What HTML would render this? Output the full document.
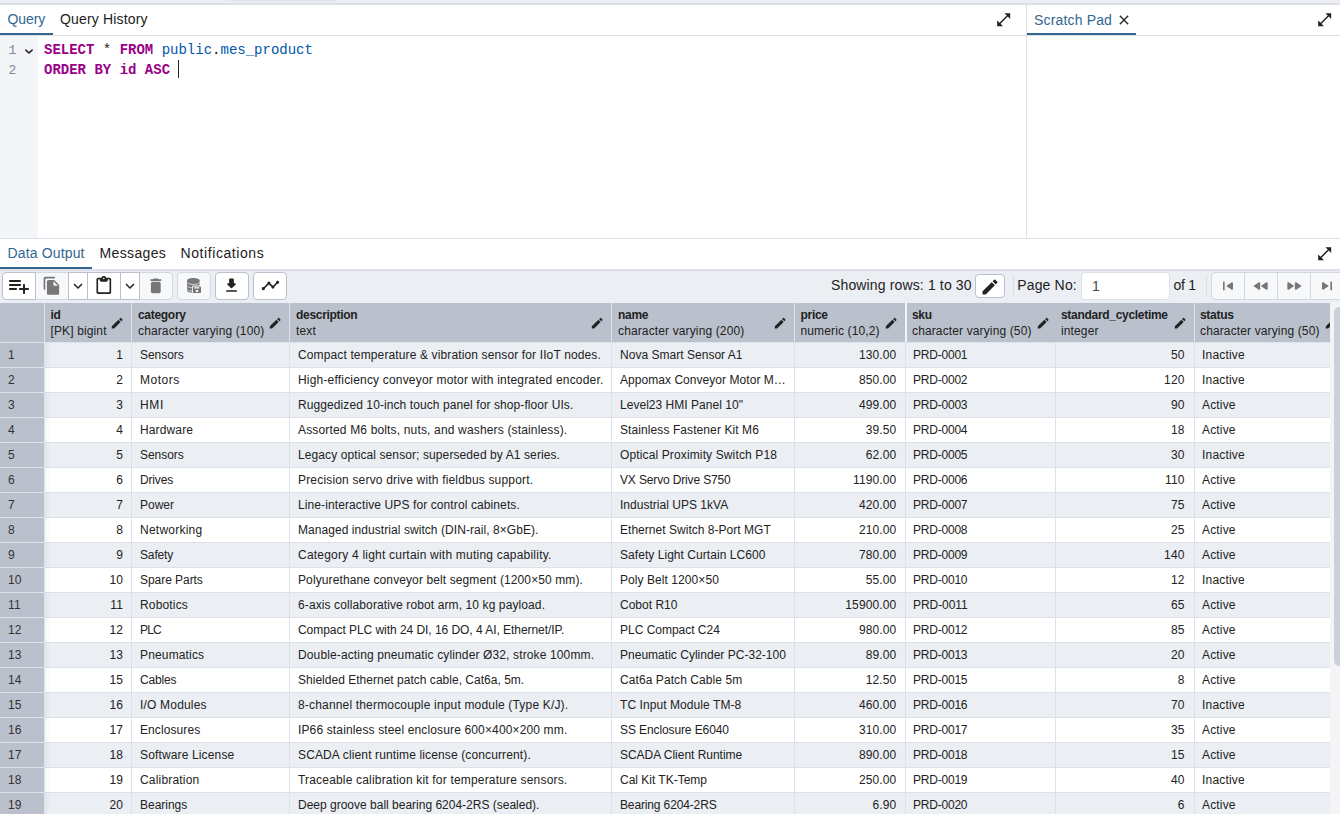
<!DOCTYPE html>
<html lang="en"><head><meta charset="utf-8"><title>Query Tool</title>
<style>
*{box-sizing:border-box;margin:0;padding:0}
html,body{width:1340px;height:814px;overflow:hidden;background:#fff}
body{position:relative;font-family:"Liberation Sans",sans-serif;font-size:14px;color:#222;-webkit-font-smoothing:antialiased}
.abs{position:absolute}
#topband{left:0;top:0;width:1340px;height:5px;background:#ebeef3;border-bottom:2px solid #dde0e6}
#toptab{left:230px;top:0;width:105px;height:1px;background:#dfe2e8}
.tabbar{height:31px;border-bottom:1px solid #dde0e6;background:#fff}
.tab{position:absolute;top:0;height:30px;line-height:28px;font-size:14px;color:#222;white-space:nowrap}
.tab.act{color:#326690;border-bottom:2px solid #326690}
.ico{position:absolute;fill:#222}
#gutter{left:0;top:36px;width:38px;height:202px;background:#f3f5f9}
.ln{position:absolute;left:8.500px;font-family:"Liberation Mono",monospace;font-size:13px;line-height:20px;color:#7f8899}
.code{position:absolute;left:44px;font-family:"Liberation Mono",monospace;font-size:14px;line-height:20px;white-space:pre;color:#222}
.kw{color:#908;font-weight:bold}
.vr{color:#05a}
#vsplit{left:1026px;top:5px;width:1px;height:233px;background:#dde0e6}
#hsplit{left:0;top:238px;width:1340px;height:1px;background:#dde0e6}
#toolbar{left:0;top:270px;width:1340px;height:33px;background:#ebeef3;border-top:1px solid #dde0e6}
.btn{position:absolute;top:272px;height:28px;background:#fff;border:1px solid #bac1cd}
.btn.dis{background:#f7f8fa;border-color:#d3d8e0}
.btn svg{position:absolute;fill:#222}
.btn.dis svg{fill:#777}
.tt{position:absolute;font-size:14px;line-height:16px;white-space:nowrap;color:#222}
.ghead{position:absolute;left:0;top:303px;width:1330px;height:40px;overflow:hidden;background:#bac1cd;border-bottom:1px solid #e0e3e9}
.hc{position:absolute;top:0;height:39px;border-right:1px solid #dfe2e8;font-size:12px;line-height:16px;color:#222;padding:4px 0 0 6px;white-space:nowrap;overflow:hidden}
.hc b{display:block;font-weight:bold;letter-spacing:-.3px}
.hc span{display:block;letter-spacing:.13px}
.hc .pen{position:absolute;right:6.2px;top:12.5px;width:14.4px;height:14.4px;fill:#222}
.hc.nb{border-right-color:transparent}
.hc.nb .pen{right:4.2px}
.hc.st .pen{right:4.4px}
.hc.wb{border-right:2px solid #f1f3f6;z-index:2}
#fshadow{left:45px;top:343px;width:5px;height:471px;background:linear-gradient(to right,rgba(40,50,70,.05),rgba(40,50,70,0))}
.row{position:absolute;left:0;width:1330px;height:25px;background:#fff;overflow:hidden}
.row.odd{background:#ebeef3}
.c{position:absolute;top:0;height:25px;line-height:24px;font-size:12px;padding:0 8px;border-right:1px solid #dde0e6;border-bottom:1px solid #dde0e6;white-space:nowrap;overflow:hidden;color:#222;letter-spacing:.13px}
.c.r{text-align:right}
.c.rn{background:#bac1cd;border-right:1px solid #dfe2e8;border-bottom:1px solid #dfe2e8;color:#333}
#sbtrack{left:1330px;top:303px;width:10px;height:511px;background:#f3f4f6}
#sbthumb{left:1334px;top:307px;width:10px;height:359px;border-radius:5px;background:#ccd0da}
</style></head><body>
<div class="abs" id="topband"></div><div class="abs" id="toptab"></div>

<div class="abs tabbar" style="left:0;top:5px;width:1026px">
  <div class="tab act" style="left:0;width:53px;padding-left:7.500px;letter-spacing:-.1px">Query</div>
  <div class="tab" style="left:60px;letter-spacing:.17px">Query History</div>
</div>
<svg class="ico" style="left:994.830px;top:10.800px;width:17.330px;height:17.330px" viewBox="0 0 24 24"><path d="M21 11V3h-8l3.290 3.290-10 10L3 13v8h8l-3.290-3.290 10-10z"/></svg>

<div class="abs tabbar" style="left:1027px;top:5px;width:313px">
  <div class="tab act" style="left:0;width:109px;padding-left:7px;line-height:30px;letter-spacing:.16px">Scratch Pad</div>
</div>
<svg class="ico" style="left:1116.1px;top:12.35px;width:16px;height:16px" viewBox="0 0 24 24"><path d="M19 6.410 17.590 5 12 10.590 6.410 5 5 6.410 10.590 12 5 17.590 6.410 19 12 13.410 17.590 19 19 17.590 13.410 12z"/></svg>
<svg class="ico" style="left:1315.830px;top:10.800px;width:17.330px;height:17.330px" viewBox="0 0 24 24"><path d="M21 11V3h-8l3.290 3.290-10 10L3 13v8h8l-3.290-3.290 10-10z"/></svg>

<div class="abs" id="gutter"></div>
<div class="ln" style="top:41.300px">1</div>
<div class="ln" style="top:61.300px">2</div>
<svg class="abs" style="left:20px;top:43.500px;width:18px;height:14px" viewBox="0 0 18 14"><path d="M5.900 6.100l3.100 2.900 3.100-2.900" fill="none" stroke="#222" stroke-width="1.600" stroke-linecap="round" stroke-linejoin="round"/></svg>
<div class="code" style="top:40px"><span class="kw">SELECT</span> * <span class="kw">FROM</span> <span class="vr">public</span>.<span class="vr">mes_product</span></div>
<div class="code" style="top:60px"><span class="kw">ORDER BY</span> <span class="kw">id</span> <span class="kw">ASC</span> </div>
<div class="abs" style="left:178px;top:60px;width:1px;height:18px;background:#222"></div>
<div class="abs" id="vsplit"></div>
<div class="abs" id="hsplit"></div>

<div class="abs tabbar" style="left:0;top:239px;width:1340px">
  <div class="tab act" style="left:0;width:92px;padding-left:7.500px;letter-spacing:.15px">Data Output</div>
  <div class="tab" style="left:99.500px;letter-spacing:.36px">Messages</div>
  <div class="tab" style="left:180.500px;letter-spacing:.58px">Notifications</div>
</div>
<svg class="ico" style="left:1315.830px;top:244.800px;width:17.330px;height:17.330px" viewBox="0 0 24 24"><path d="M21 11V3h-8l3.290 3.290-10 10L3 13v8h8l-3.290-3.290 10-10z"/></svg>

<div class="abs" id="toolbar"></div>
<div class="btn dis" style="left:35px;width:34px;border-radius:0;"><svg style="left:6.20px;top:3.20px;width:19.6px;height:19.6px" viewBox="0 0 24 24"><path d="M15 1H4c-1.1 0-2 .9-2 2v13c0 .55.45 1 1 1s1-.45 1-1V4c0-.55.45-1 1-1h10c.55 0 1-.45 1-1s-.45-1-1-1zm.59 4.59 4.83 4.83c.37.37.58.88.58 1.41V21c0 1.1-.9 2-2 2H7.990C6.890 23 6 22.1 6 21l.01-14c0-1.1.89-2 1.990-2h6.170c.53 0 1.040.21 1.420.59zM15 12h4.500L14 6.500V11c0 .55.45 1 1 1z"/></svg></div>
<div class="btn dis" style="left:139px;width:34px;border-radius:0 4px 4px 0;"><svg style="left:6.20px;top:3.20px;width:19.6px;height:19.6px" viewBox="0 0 24 24"><path d="M6 19c0 1.1.9 2 2 2h8c1.1 0 2-.9 2-2V9c0-1.1-.9-2-2-2H8c-1.1 0-2 .9-2 2v10zM18 4h-2.500l-.71-.71c-.18-.18-.44-.29-.7-.29H9.910c-.26 0-.52.11-.7.29L8.500 4H6c-.55 0-1 .45-1 1s.45 1 1 1h12c.55 0 1-.45 1-1s-.45-1-1-1z"/></svg></div>
<div class="btn" style="left:2px;width:34px;border-radius:4px 0 0 4px;"><svg style="left:4.00px;top:1.00px;width:24px;height:24px" viewBox="0 0 24 24"><path d="M13 10H3c-.55 0-1 .45-1 1s.45 1 1 1h10c.55 0 1-.45 1-1s-.45-1-1-1zm0-4H3c-.55 0-1 .45-1 1s.45 1 1 1h10c.55 0 1-.45 1-1s-.45-1-1-1zm5 8v-3c0-.55-.45-1-1-1s-1 .45-1 1v3h-3c-.55 0-1 .45-1 1s.45 1 1 1h3v3c0 .55.45 1 1 1s1-.45 1-1v-3h3c.55 0 1-.45 1-1s-.45-1-1-1h-3zM3 16h6c.55 0 1-.45 1-1s-.45-1-1-1H3c-.55 0-1 .45-1 1s.45 1 1 1z"/></svg></div>
<div class="btn" style="left:68px;width:20px;border-radius:0;"><svg style="left:0.00px;top:4.00px;width:18px;height:18px" viewBox="0 0 24 24"><path d="M7.41 8.59 12 13.17l4.59-4.58L18 10l-6 6-6-6 1.41-1.41z"/></svg></div>
<div class="btn" style="left:87px;width:34px;border-radius:0;"><svg style="left:6.20px;top:3.20px;width:19.6px;height:19.6px" viewBox="0 0 24 24"><path d="M19 2h-4.180C14.4.84 13.3 0 12 0S9.600.84 9.180 2H5c-1.1 0-2 .9-2 2v16c0 1.1.9 2 2 2h14c1.1 0 2-.9 2-2V4c0-1.1-.9-2-2-2zm-7 0c.55 0 1 .45 1 1s-.45 1-1 1-1-.45-1-1 .45-1 1-1zm6 18H6c-.55 0-1-.45-1-1V5c0-.55.45-1 1-1h1v1c0 1.1.9 2 2 2h6c1.1 0 2-.9 2-2V4h1c.55 0 1 .45 1 1v14c0 .55-.45 1-1 1z"/></svg></div>
<div class="btn" style="left:120px;width:20px;border-radius:0;"><svg style="left:0.00px;top:4.00px;width:18px;height:18px" viewBox="0 0 24 24"><path d="M7.41 8.59 12 13.17l4.59-4.58L18 10l-6 6-6-6 1.41-1.41z"/></svg></div>
<div class="btn dis" style="left:177px;width:34px;border-radius:4px;"><svg style="left:0;top:0;width:32px;height:26px" viewBox="0 0 32 26"><path d="M9 7.400C9 6.100 11.800 5.100 15.300 5.100s6.300 1 6.300 2.300v10c0 1.300-2.800 2.300-6.300 2.300S9 18.700 9 17.400z"/><path d="M9 9.400c0 1.100 2.800 2 6.300 2s6.300-.9 6.300-2M9 12.800c0 1.100 2.800 2 6.300 2s6.300-.9 6.300-2M9 16.100c0 1.100 2.800 2 6.300 2s6.300-.9 6.300-2" fill="none" stroke="#f7f8fa" stroke-width=".7"/><rect x="14.200" y="12.600" width="9.600" height="8.200" rx="1" fill="#f7f8fa"/><rect x="15" y="13.400" width="8" height="6.600" rx=".8"/><rect x="16.400" y="14.200" width="4.800" height="1.300" fill="#f7f8fa"/><rect x="17.800" y="17" width="2.400" height="2" fill="#f7f8fa"/></svg></div>
<div class="btn" style="left:215px;width:34px;border-radius:4px;"><svg style="left:6.20px;top:2.50px;width:19px;height:19px" viewBox="0 0 24 24"><path d="M16.59 9H15V4c0-.55-.45-1-1-1h-4c-.55 0-1 .45-1 1v5H7.410c-.89 0-1.340 1.080-.71 1.710l4.590 4.590c.39.39 1.020.39 1.410 0l4.590-4.590c.63-.63.19-1.710-.7-1.710zM5 19c0 .55.45 1 1 1h12c.55 0 1-.45 1-1s-.45-1-1-1H6c-.55 0-1 .45-1 1z"/></svg></div>
<div class="btn" style="left:253px;width:34px;border-radius:4px;"><svg style="left:6.50px;top:3.00px;width:19px;height:19px" viewBox="0 0 24 24"><path d="M23 8c0 1.1-.9 2-2 2-.18 0-.35-.02-.51-.07l-3.560 3.550c.05.16.07.34.07.52 0 1.1-.9 2-2 2s-2-.9-2-2c0-.18.02-.36.07-.52l-2.550-2.550c-.16.05-.34.07-.52.07s-.36-.02-.52-.07l-4.550 4.560c.05.16.07.33.07.51 0 1.1-.9 2-2 2s-2-.9-2-2 .9-2 2-2c.18 0 .35.02.51.07l4.560-4.550C8.020 9.360 8 9.180 8 9c0-1.1.9-2 2-2s2 .9 2 2c0 .18-.02.36-.07.52l2.550 2.550c.16-.05.34-.07.52-.07s.36.02.52.07l3.550-3.560C19.020 8.350 19 8.180 19 8c0-1.1.9-2 2-2s2 .9 2 2z"/></svg></div>
<div class="tt" style="left:831px;top:277px;letter-spacing:.14px">Showing rows: 1 to 30</div>
<div class="btn" style="left:975px;top:274px;width:30px;height:24px;border-radius:4px"><svg style="left:4.00px;top:1.50px;width:20px;height:20px" viewBox="0 0 24 24"><path d="M3 17.460v3.040c0 .28.22.5.5.5h3.040c.13 0 .26-.05.35-.15L17.810 9.940l-3.750-3.750L3.150 17.1c-.1.1-.15.22-.15.36zM20.710 7.040a.996.996 0 0 0 0-1.410l-2.340-2.340a.996.996 0 0 0-1.410 0l-1.830 1.830 3.750 3.750 1.830-1.830z"/></svg></div>
<div class="abs" style="left:1013px;top:276px;width:1px;height:20px;background:#d9dde4"></div>
<div class="tt" style="left:1017.200px;top:277px;letter-spacing:.17px">Page No:</div>
<div class="abs" style="left:1081px;top:272px;width:89px;height:28px;background:#fff;border:1px solid #dde0e6;border-radius:4px"></div>
<div class="tt" style="left:1092px;top:278px;color:#444">1</div>
<div class="tt" style="left:1173.600px;top:277px;letter-spacing:-.27px">of 1</div>
<div class="abs" style="left:1206px;top:276px;width:1px;height:20px;background:#d9dde4"></div>
<div class="btn dis" style="left:1211px;width:34px;border-radius:4px 0 0 4px;"><svg preserveAspectRatio="none" style="left:6.00px;top:3.50px;width:20px;height:18px" viewBox="0 0 24 24"><path d="M7 6c.55 0 1 .45 1 1v10c0 .55-.45 1-1 1s-1-.45-1-1V7c0-.55.45-1 1-1zm3.660 6.820 5.770 4.070c.66.47 1.580-.01 1.580-.82V7.930c0-.81-.91-1.280-1.580-.82l-5.770 4.070c-.57.4-.57 1.240 0 1.640z"/></svg></div>
<div class="btn dis" style="left:1244px;width:34px;border-radius:0;"><svg preserveAspectRatio="none" style="left:6.00px;top:3.50px;width:20px;height:18px" viewBox="0 0 24 24"><path d="M11 16.070V7.930c0-.81-.91-1.280-1.580-.82l-5.770 4.070c-.56.4-.56 1.240 0 1.630l5.770 4.070c.67.47 1.580 0 1.580-.81zm1.660-3.250 5.770 4.070c.66.47 1.580-.01 1.580-.82V7.930c0-.81-.91-1.280-1.580-.82l-5.770 4.070c-.57.4-.57 1.240 0 1.640z"/></svg></div>
<div class="btn dis" style="left:1277px;width:34px;border-radius:0;"><svg preserveAspectRatio="none" style="left:6.00px;top:3.50px;width:20px;height:18px" viewBox="0 0 24 24"><path d="M5.580 16.890l5.770-4.070c.56-.4.56-1.240 0-1.630L5.580 7.110C4.910 6.650 4 7.120 4 7.930v8.140c0 .81.91 1.280 1.580.82zM13 7.930v8.140c0 .81.91 1.280 1.580.82l5.770-4.070c.56-.4.56-1.240 0-1.630l-5.770-4.070c-.67-.47-1.580 0-1.580.81z"/></svg></div>
<div class="btn dis" style="left:1310px;width:34px;border-radius:0;"><svg preserveAspectRatio="none" style="left:6.00px;top:3.50px;width:20px;height:18px" viewBox="0 0 24 24"><path d="M7.580 16.890l5.770-4.070c.56-.4.56-1.240 0-1.630L7.580 7.110C6.910 6.650 6 7.120 6 7.930v8.140c0 .81.91 1.280 1.580.82zM16 7v10c0 .55.450 1 1 1s1-.45 1-1V7c0-.55-.45-1-1-1s-1 .45-1 1z"/></svg></div>
<div class="ghead">
<div class="hc" style="left:0;width:45px"></div>
<div class="hc" style="left:45px;width:87px;padding-left:5.500px"><b>id</b><span>[PK] bigint</span><svg class="pen" viewBox="0 0 24 24"><path d="M3 17.25V21h3.75L17.81 9.94l-3.75-3.75L3 17.25zM20.71 7.04a.996.996 0 0 0 0-1.41l-2.34-2.34a.996.996 0 0 0-1.41 0l-1.83 1.83 3.75 3.75 1.83-1.83z"/></svg></div>
<div class="hc" style="left:132px;width:158px"><b>category</b><span>character varying (100)</span><svg class="pen" viewBox="0 0 24 24"><path d="M3 17.25V21h3.75L17.81 9.94l-3.75-3.75L3 17.25zM20.71 7.04a.996.996 0 0 0 0-1.41l-2.34-2.34a.996.996 0 0 0-1.41 0l-1.83 1.83 3.75 3.75 1.83-1.83z"/></svg></div>
<div class="hc" style="left:290px;width:322px"><b>description</b><span>text</span><svg class="pen" viewBox="0 0 24 24"><path d="M3 17.25V21h3.75L17.81 9.94l-3.75-3.75L3 17.25zM20.71 7.04a.996.996 0 0 0 0-1.41l-2.34-2.34a.996.996 0 0 0-1.41 0l-1.83 1.83 3.75 3.75 1.83-1.83z"/></svg></div>
<div class="hc" style="left:612px;width:183px"><b>name</b><span>character varying (200)</span><svg class="pen" viewBox="0 0 24 24"><path d="M3 17.25V21h3.75L17.81 9.94l-3.75-3.75L3 17.25zM20.71 7.04a.996.996 0 0 0 0-1.41l-2.34-2.34a.996.996 0 0 0-1.41 0l-1.83 1.83 3.75 3.75 1.83-1.83z"/></svg></div>
<div class="hc wb" style="left:795px;width:112px;padding-left:5.500px"><b>price</b><span>numeric (10,2)</span><svg class="pen" viewBox="0 0 24 24"><path d="M3 17.25V21h3.75L17.81 9.94l-3.75-3.75L3 17.25zM20.71 7.04a.996.996 0 0 0 0-1.41l-2.34-2.34a.996.996 0 0 0-1.41 0l-1.83 1.83 3.75 3.75 1.83-1.83z"/></svg></div>
<div class="hc nb" style="left:906px;width:150px"><b>sku</b><span>character varying (50)</span><svg class="pen" viewBox="0 0 24 24"><path d="M3 17.25V21h3.75L17.81 9.94l-3.75-3.75L3 17.25zM20.71 7.04a.996.996 0 0 0 0-1.41l-2.34-2.34a.996.996 0 0 0-1.41 0l-1.83 1.83 3.75 3.75 1.83-1.83z"/></svg></div>
<div class="hc" style="left:1056px;width:139px;padding-left:5px"><b>standard_cycletime</b><span>integer</span><svg class="pen" viewBox="0 0 24 24"><path d="M3 17.25V21h3.75L17.81 9.94l-3.75-3.75L3 17.25zM20.71 7.04a.996.996 0 0 0 0-1.41l-2.34-2.34a.996.996 0 0 0-1.41 0l-1.83 1.83 3.75 3.75 1.83-1.83z"/></svg></div>
<div class="hc st" style="left:1195px;width:149px;padding-left:5px"><b>status</b><span>character varying (50)</span><svg class="pen" viewBox="0 0 24 24"><path d="M3 17.25V21h3.75L17.81 9.94l-3.75-3.75L3 17.25zM20.71 7.04a.996.996 0 0 0 0-1.41l-2.34-2.34a.996.996 0 0 0-1.41 0l-1.83 1.83 3.75 3.75 1.83-1.83z"/></svg></div>
</div>
<div class="row odd" style="top:343px">
<div class="c rn" style="left:0px;width:45px">1</div>
<div class="c r" style="left:45px;width:87px">1</div>
<div class="c" style="left:132px;width:158px;letter-spacing:-.037px">Sensors</div>
<div class="c" style="left:290px;width:322px;letter-spacing:.130px">Compact temperature &amp; vibration sensor for IIoT nodes.</div>
<div class="c" style="left:612px;width:183px;letter-spacing:.025px">Nova Smart Sensor A1</div>
<div class="c r" style="left:795px;width:111px;padding-right:8.600px">130.00</div>
<div class="c" style="left:906px;width:150px;padding-left:7px;letter-spacing:-.213px">PRD-0001</div>
<div class="c r" style="left:1056px;width:139px;padding-right:9.500px">50</div>
<div class="c" style="left:1195px;width:149px;padding-left:7px;letter-spacing:.187px">Inactive</div>
</div>
<div class="row" style="top:368px">
<div class="c rn" style="left:0px;width:45px">2</div>
<div class="c r" style="left:45px;width:87px">2</div>
<div class="c" style="left:132px;width:158px;letter-spacing:.530px">Motors</div>
<div class="c" style="left:290px;width:322px;letter-spacing:.185px">High-efficiency conveyor motor with integrated encoder.</div>
<div class="c" style="left:612px;width:183px;letter-spacing:.047px">Appomax Conveyor Motor M…</div>
<div class="c r" style="left:795px;width:111px;padding-right:8.600px">850.00</div>
<div class="c" style="left:906px;width:150px;padding-left:7px;letter-spacing:-.213px">PRD-0002</div>
<div class="c r" style="left:1056px;width:139px;padding-right:9.500px">120</div>
<div class="c" style="left:1195px;width:149px;padding-left:7px;letter-spacing:.187px">Inactive</div>
</div>
<div class="row odd" style="top:393px">
<div class="c rn" style="left:0px;width:45px">3</div>
<div class="c r" style="left:45px;width:87px">3</div>
<div class="c" style="left:132px;width:158px;letter-spacing:.630px">HMI</div>
<div class="c" style="left:290px;width:322px;letter-spacing:.090px">Ruggedized 10-inch touch panel for shop-floor UIs.</div>
<div class="c" style="left:612px;width:183px;letter-spacing:.030px">Level23 HMI Panel 10"</div>
<div class="c r" style="left:795px;width:111px;padding-right:8.600px">499.00</div>
<div class="c" style="left:906px;width:150px;padding-left:7px;letter-spacing:-.213px">PRD-0003</div>
<div class="c r" style="left:1056px;width:139px;padding-right:9.500px">90</div>
<div class="c" style="left:1195px;width:149px;padding-left:7px;letter-spacing:.170px">Active</div>
</div>
<div class="row" style="top:418px">
<div class="c rn" style="left:0px;width:45px">4</div>
<div class="c r" style="left:45px;width:87px">4</div>
<div class="c" style="left:132px;width:158px;letter-spacing:.130px">Hardware</div>
<div class="c" style="left:290px;width:322px;letter-spacing:.161px">Assorted M6 bolts, nuts, and washers (stainless).</div>
<div class="c" style="left:612px;width:183px;letter-spacing:.088px">Stainless Fastener Kit M6</div>
<div class="c r" style="left:795px;width:111px;padding-right:8.600px">39.50</div>
<div class="c" style="left:906px;width:150px;padding-left:7px;letter-spacing:-.213px">PRD-0004</div>
<div class="c r" style="left:1056px;width:139px;padding-right:9.500px">18</div>
<div class="c" style="left:1195px;width:149px;padding-left:7px;letter-spacing:.170px">Active</div>
</div>
<div class="row odd" style="top:443px">
<div class="c rn" style="left:0px;width:45px">5</div>
<div class="c r" style="left:45px;width:87px">5</div>
<div class="c" style="left:132px;width:158px;letter-spacing:-.037px">Sensors</div>
<div class="c" style="left:290px;width:322px;letter-spacing:.097px">Legacy optical sensor; superseded by A1 series.</div>
<div class="c" style="left:612px;width:183px;letter-spacing:.130px">Optical Proximity Switch P18</div>
<div class="c r" style="left:795px;width:111px;padding-right:8.600px">62.00</div>
<div class="c" style="left:906px;width:150px;padding-left:7px;letter-spacing:-.213px">PRD-0005</div>
<div class="c r" style="left:1056px;width:139px;padding-right:9.500px">30</div>
<div class="c" style="left:1195px;width:149px;padding-left:7px;letter-spacing:.187px">Inactive</div>
</div>
<div class="row" style="top:468px">
<div class="c rn" style="left:0px;width:45px">6</div>
<div class="c r" style="left:45px;width:87px">6</div>
<div class="c" style="left:132px;width:158px;letter-spacing:-.170px">Drives</div>
<div class="c" style="left:290px;width:322px;letter-spacing:.176px">Precision servo drive with fieldbus support.</div>
<div class="c" style="left:612px;width:183px;letter-spacing:-.148px">VX Servo Drive S750</div>
<div class="c r" style="left:795px;width:111px;padding-right:8.600px">1190.00</div>
<div class="c" style="left:906px;width:150px;padding-left:7px;letter-spacing:-.213px">PRD-0006</div>
<div class="c r" style="left:1056px;width:139px;padding-right:9.500px">110</div>
<div class="c" style="left:1195px;width:149px;padding-left:7px;letter-spacing:.170px">Active</div>
</div>
<div class="row odd" style="top:493px">
<div class="c rn" style="left:0px;width:45px">7</div>
<div class="c r" style="left:45px;width:87px">7</div>
<div class="c" style="left:132px;width:158px;letter-spacing:.005px">Power</div>
<div class="c" style="left:290px;width:322px;letter-spacing:.106px">Line-interactive UPS for control cabinets.</div>
<div class="c" style="left:612px;width:183px;letter-spacing:.019px">Industrial UPS 1kVA</div>
<div class="c r" style="left:795px;width:111px;padding-right:8.600px">420.00</div>
<div class="c" style="left:906px;width:150px;padding-left:7px;letter-spacing:-.213px">PRD-0007</div>
<div class="c r" style="left:1056px;width:139px;padding-right:9.500px">75</div>
<div class="c" style="left:1195px;width:149px;padding-left:7px;letter-spacing:.170px">Active</div>
</div>
<div class="row" style="top:518px">
<div class="c rn" style="left:0px;width:45px">8</div>
<div class="c r" style="left:45px;width:87px">8</div>
<div class="c" style="left:132px;width:158px;letter-spacing:.241px">Networking</div>
<div class="c" style="left:290px;width:322px;letter-spacing:.061px">Managed industrial switch (DIN-rail, 8×GbE).</div>
<div class="c" style="left:612px;width:183px;letter-spacing:.030px">Ethernet Switch 8-Port MGT</div>
<div class="c r" style="left:795px;width:111px;padding-right:8.600px">210.00</div>
<div class="c" style="left:906px;width:150px;padding-left:7px;letter-spacing:-.213px">PRD-0008</div>
<div class="c r" style="left:1056px;width:139px;padding-right:9.500px">25</div>
<div class="c" style="left:1195px;width:149px;padding-left:7px;letter-spacing:.170px">Active</div>
</div>
<div class="row odd" style="top:543px">
<div class="c rn" style="left:0px;width:45px">9</div>
<div class="c r" style="left:45px;width:87px">9</div>
<div class="c" style="left:132px;width:158px;letter-spacing:-.150px">Safety</div>
<div class="c" style="left:290px;width:322px;letter-spacing:.215px">Category 4 light curtain with muting capability.</div>
<div class="c" style="left:612px;width:183px;letter-spacing:.050px">Safety Light Curtain LC600</div>
<div class="c r" style="left:795px;width:111px;padding-right:8.600px">780.00</div>
<div class="c" style="left:906px;width:150px;padding-left:7px;letter-spacing:-.213px">PRD-0009</div>
<div class="c r" style="left:1056px;width:139px;padding-right:9.500px">140</div>
<div class="c" style="left:1195px;width:149px;padding-left:7px;letter-spacing:.170px">Active</div>
</div>
<div class="row" style="top:568px">
<div class="c rn" style="left:0px;width:45px">10</div>
<div class="c r" style="left:45px;width:87px">10</div>
<div class="c" style="left:132px;width:158px;letter-spacing:-.050px">Spare Parts</div>
<div class="c" style="left:290px;width:322px;letter-spacing:.108px">Polyurethane conveyor belt segment (1200×50 mm).</div>
<div class="c" style="left:612px;width:183px;letter-spacing:.067px">Poly Belt 1200×50</div>
<div class="c r" style="left:795px;width:111px;padding-right:8.600px">55.00</div>
<div class="c" style="left:906px;width:150px;padding-left:7px;letter-spacing:-.213px">PRD-0010</div>
<div class="c r" style="left:1056px;width:139px;padding-right:9.500px">12</div>
<div class="c" style="left:1195px;width:149px;padding-left:7px;letter-spacing:.187px">Inactive</div>
</div>
<div class="row odd" style="top:593px">
<div class="c rn" style="left:0px;width:45px">11</div>
<div class="c r" style="left:45px;width:87px">11</div>
<div class="c" style="left:132px;width:158px;letter-spacing:.158px">Robotics</div>
<div class="c" style="left:290px;width:322px;letter-spacing:.108px">6-axis collaborative robot arm, 10 kg payload.</div>
<div class="c" style="left:612px;width:183px;letter-spacing:.005px">Cobot R10</div>
<div class="c r" style="left:795px;width:111px;padding-right:8.600px">15900.00</div>
<div class="c" style="left:906px;width:150px;padding-left:7px;letter-spacing:-.070px">PRD-0011</div>
<div class="c r" style="left:1056px;width:139px;padding-right:9.500px">65</div>
<div class="c" style="left:1195px;width:149px;padding-left:7px;letter-spacing:.170px">Active</div>
</div>
<div class="row" style="top:618px">
<div class="c rn" style="left:0px;width:45px">12</div>
<div class="c r" style="left:45px;width:87px">12</div>
<div class="c" style="left:132px;width:158px;letter-spacing:-.870px">PLC</div>
<div class="c" style="left:290px;width:322px;letter-spacing:-.047px">Compact PLC with 24 DI, 16 DO, 4 AI, Ethernet/IP.</div>
<div class="c" style="left:612px;width:183px;letter-spacing:-.013px">PLC Compact C24</div>
<div class="c r" style="left:795px;width:111px;padding-right:8.600px">980.00</div>
<div class="c" style="left:906px;width:150px;padding-left:7px;letter-spacing:-.213px">PRD-0012</div>
<div class="c r" style="left:1056px;width:139px;padding-right:9.500px">85</div>
<div class="c" style="left:1195px;width:149px;padding-left:7px;letter-spacing:.170px">Active</div>
</div>
<div class="row odd" style="top:643px">
<div class="c rn" style="left:0px;width:45px">13</div>
<div class="c r" style="left:45px;width:87px">13</div>
<div class="c" style="left:132px;width:158px;letter-spacing:.152px">Pneumatics</div>
<div class="c" style="left:290px;width:322px;letter-spacing:.130px">Double-acting pneumatic cylinder Ø32, stroke 100mm.</div>
<div class="c" style="left:612px;width:183px;letter-spacing:.019px">Pneumatic Cylinder PC-32-100</div>
<div class="c r" style="left:795px;width:111px;padding-right:8.600px">89.00</div>
<div class="c" style="left:906px;width:150px;padding-left:7px;letter-spacing:-.213px">PRD-0013</div>
<div class="c r" style="left:1056px;width:139px;padding-right:9.500px">20</div>
<div class="c" style="left:1195px;width:149px;padding-left:7px;letter-spacing:.170px">Active</div>
</div>
<div class="row" style="top:668px">
<div class="c rn" style="left:0px;width:45px">14</div>
<div class="c r" style="left:45px;width:87px">15</div>
<div class="c" style="left:132px;width:158px;letter-spacing:-.150px">Cables</div>
<div class="c" style="left:290px;width:322px;letter-spacing:.018px">Shielded Ethernet patch cable, Cat6a, 5m.</div>
<div class="c" style="left:612px;width:183px;letter-spacing:.077px">Cat6a Patch Cable 5m</div>
<div class="c r" style="left:795px;width:111px;padding-right:8.600px">12.50</div>
<div class="c" style="left:906px;width:150px;padding-left:7px;letter-spacing:-.213px">PRD-0015</div>
<div class="c r" style="left:1056px;width:139px;padding-right:9.500px">8</div>
<div class="c" style="left:1195px;width:149px;padding-left:7px;letter-spacing:.170px">Active</div>
</div>
<div class="row odd" style="top:693px">
<div class="c rn" style="left:0px;width:45px">15</div>
<div class="c r" style="left:45px;width:87px">16</div>
<div class="c" style="left:132px;width:158px;letter-spacing:.190px">I/O Modules</div>
<div class="c" style="left:290px;width:322px;letter-spacing:.173px">8-channel thermocouple input module (Type K/J).</div>
<div class="c" style="left:612px;width:183px;letter-spacing:.077px">TC Input Module TM-8</div>
<div class="c r" style="left:795px;width:111px;padding-right:8.600px">460.00</div>
<div class="c" style="left:906px;width:150px;padding-left:7px;letter-spacing:-.213px">PRD-0016</div>
<div class="c r" style="left:1056px;width:139px;padding-right:9.500px">70</div>
<div class="c" style="left:1195px;width:149px;padding-left:7px;letter-spacing:.187px">Inactive</div>
</div>
<div class="row" style="top:718px">
<div class="c rn" style="left:0px;width:45px">16</div>
<div class="c r" style="left:45px;width:87px">17</div>
<div class="c" style="left:132px;width:158px;letter-spacing:.086px">Enclosures</div>
<div class="c" style="left:290px;width:322px;letter-spacing:.142px">IP66 stainless steel enclosure 600×400×200 mm.</div>
<div class="c" style="left:612px;width:183px;letter-spacing:-.106px">SS Enclosure E6040</div>
<div class="c r" style="left:795px;width:111px;padding-right:8.600px">310.00</div>
<div class="c" style="left:906px;width:150px;padding-left:7px;letter-spacing:-.213px">PRD-0017</div>
<div class="c r" style="left:1056px;width:139px;padding-right:9.500px">35</div>
<div class="c" style="left:1195px;width:149px;padding-left:7px;letter-spacing:.170px">Active</div>
</div>
<div class="row odd" style="top:743px">
<div class="c rn" style="left:0px;width:45px">17</div>
<div class="c r" style="left:45px;width:87px">18</div>
<div class="c" style="left:132px;width:158px;letter-spacing:.144px">Software License</div>
<div class="c" style="left:290px;width:322px;letter-spacing:.130px">SCADA client runtime license (concurrent).</div>
<div class="c" style="left:612px;width:183px;letter-spacing:-.028px">SCADA Client Runtime</div>
<div class="c r" style="left:795px;width:111px;padding-right:8.600px">890.00</div>
<div class="c" style="left:906px;width:150px;padding-left:7px;letter-spacing:-.213px">PRD-0018</div>
<div class="c r" style="left:1056px;width:139px;padding-right:9.500px">15</div>
<div class="c" style="left:1195px;width:149px;padding-left:7px;letter-spacing:.170px">Active</div>
</div>
<div class="row" style="top:768px">
<div class="c rn" style="left:0px;width:45px">18</div>
<div class="c r" style="left:45px;width:87px">19</div>
<div class="c" style="left:132px;width:158px;letter-spacing:.190px">Calibration</div>
<div class="c" style="left:290px;width:322px;letter-spacing:.181px">Traceable calibration kit for temperature sensors.</div>
<div class="c" style="left:612px;width:183px;letter-spacing:-.013px">Cal Kit TK-Temp</div>
<div class="c r" style="left:795px;width:111px;padding-right:8.600px">250.00</div>
<div class="c" style="left:906px;width:150px;padding-left:7px;letter-spacing:-.213px">PRD-0019</div>
<div class="c r" style="left:1056px;width:139px;padding-right:9.500px">40</div>
<div class="c" style="left:1195px;width:149px;padding-left:7px;letter-spacing:.187px">Inactive</div>
</div>
<div class="row odd" style="top:793px">
<div class="c rn" style="left:0px;width:45px">19</div>
<div class="c r" style="left:45px;width:87px">20</div>
<div class="c" style="left:132px;width:158px;letter-spacing:-.012px">Bearings</div>
<div class="c" style="left:290px;width:322px;letter-spacing:-.001px">Deep groove ball bearing 6204-2RS (sealed).</div>
<div class="c" style="left:612px;width:183px;letter-spacing:-.137px">Bearing 6204-2RS</div>
<div class="c r" style="left:795px;width:111px;padding-right:8.600px">6.90</div>
<div class="c" style="left:906px;width:150px;padding-left:7px;letter-spacing:-.213px">PRD-0020</div>
<div class="c r" style="left:1056px;width:139px;padding-right:9.500px">6</div>
<div class="c" style="left:1195px;width:149px;padding-left:7px;letter-spacing:.170px">Active</div>
</div>
<div class="abs" id="fshadow"></div>
<div class="abs" id="sbtrack"></div>
<div class="abs" id="sbthumb"></div>
</body></html>
